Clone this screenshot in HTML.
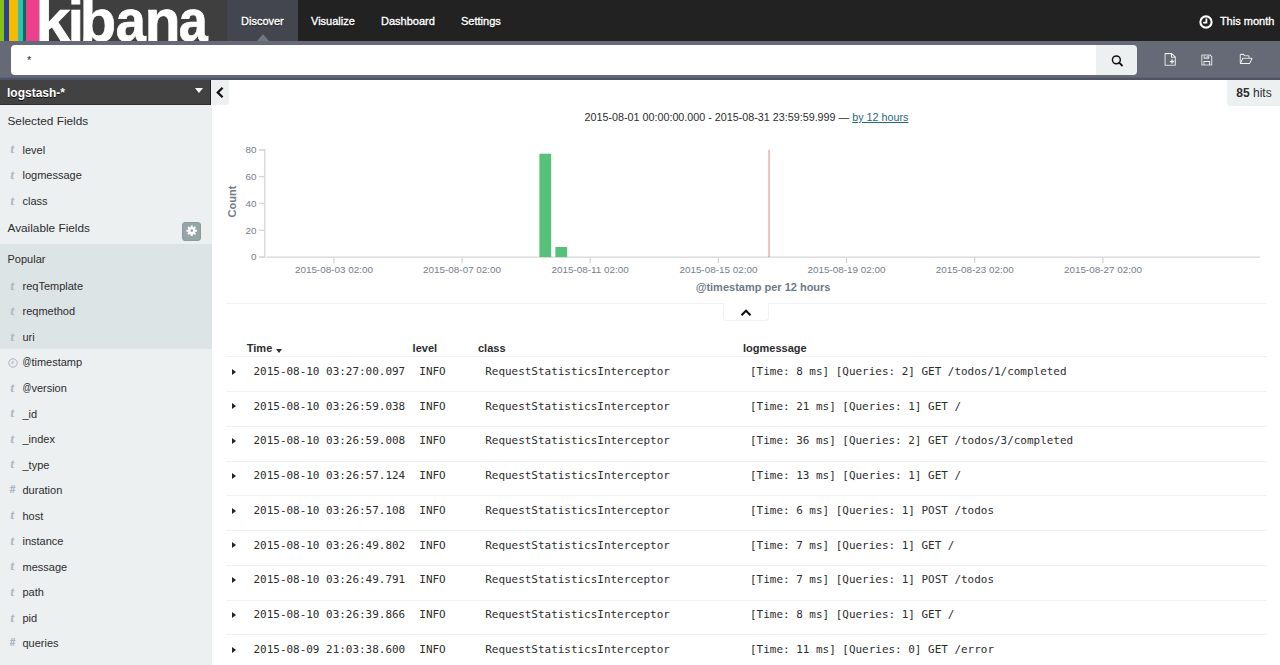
<!DOCTYPE html>
<html lang="en"><head><meta charset="utf-8"><title>Discover - Kibana 4</title>
<style>
*{box-sizing:border-box}
html,body{margin:0;padding:0}
body{width:1280px;height:665px;overflow:hidden;background:#fff;font-family:"Liberation Sans",Arial,sans-serif;font-size:11px;color:#2d2d2d;position:relative}
.abs{position:absolute}
#sub>svg{filter:drop-shadow(0 0 .7px rgba(0,0,0,.55))}
#nav{position:absolute;left:0;top:0;width:1280px;height:41px;background:#222}
#logo{position:absolute;left:0;top:0;width:227px;height:41px;background:#3f3f3f;overflow:hidden}
#logo b{position:absolute;top:0;height:41px}
#logo .kt{position:absolute;left:0;top:-14.1px;font-weight:bold;font-size:58.6px;line-height:70px;color:#fff;white-space:nowrap;-webkit-text-stroke:.75px #fff}
#logo .kt span{position:absolute;top:0;transform-origin:0 0;display:block}
.nl{position:absolute;top:0;height:41px;line-height:42.4px;color:#fff;font-size:11px;padding:0 13.5px;-webkit-text-stroke:.35px #fff;text-shadow:0 1px 1px rgba(0,0,0,.9)}
.nl.act{background:#43464f}
.nl.act:after{content:"";position:absolute;left:50%;bottom:0;margin-left:-6px;border:6px solid transparent;border-top:0;border-bottom:7px solid #70757f}
#sub{position:absolute;left:0;top:41px;width:1280px;height:39px;background:#656a76}
#q{position:absolute;left:11px;top:4px;width:1086px;height:30px;background:#fff;border-radius:4px 0 0 4px;font-size:11px;line-height:30px;padding-left:16px;color:#2d2d2d}
#qb{position:absolute;left:1096px;top:4px;width:41px;height:30px;background:#ecf0f1;border-radius:0 4px 4px 0}
#side{position:absolute;left:0;top:80px;width:212px;height:585px;background:#ecf0f1;overflow:hidden}
#ip{position:absolute;left:0;top:0;width:211px;height:25px;background:#424242;border-right:1px solid #222;border-bottom:1px solid #303030;color:#fff;font-weight:bold;font-size:12px;line-height:27.6px;padding-left:7px;text-shadow:0 1px 0 rgba(0,0,0,.8)}
#ip:after{content:"";position:absolute;left:194.5px;top:8px;border:4px solid transparent;border-bottom:0;border-top:5px solid #fff}
.sh{position:absolute;left:7.5px;font-size:11.8px;line-height:20px;margin-top:.45px;color:#2d2d2d}
#pop{position:absolute;left:0;top:164px;width:212px;height:105px;background:#dde4e6}
.fld{position:absolute;left:0;height:20px;line-height:20px;font-size:11px;white-space:nowrap;color:#2d2d2d;top:0}
#side .fld{margin-top:-80px}
.fld span{position:absolute;left:22.5px;top:0}
.ft{position:absolute;left:10.6px;top:-.2px;font-family:"Liberation Serif",serif;font-style:italic;font-size:12.5px;color:#aeb8c3;font-weight:bold;-webkit-text-stroke:.2px #aeb8c3}
.fh{position:absolute;left:9.7px;top:0;font-style:normal;font-size:10px;color:#a9b4c0;font-weight:bold;-webkit-text-stroke:.2px #a9b4c0}
.at{display:inline-block;font-weight:normal;transform:translate(-.4px,-1.2px) scaleX(.8);transform-origin:0 50%;margin-right:-2.3px}
.fc{position:absolute;left:7.5px;top:5.5px}
#gear{position:absolute;left:182.4px;top:141.7px;width:18.9px;height:19.3px;background:#95a5a6;border:1px solid #8b9c9d;border-radius:3px}
#coll{position:absolute;left:212px;top:80px;width:17px;height:25px;background:#ecf0f1;border-radius:0 0 4px 0}
#hits{position:absolute;left:1227px;top:80px;width:53px;height:25.5px;background:#ecf0f1;border-radius:0 0 0 4px;font-size:12px;line-height:27px;padding-left:9.3px;color:#2d2d2d}
#ttl{position:absolute;left:446.5px;top:107px;width:600px;text-align:center;font-size:10.75px;line-height:20px;color:#2d2d2d;white-space:nowrap}
#ttl a{color:#1f6b7a;text-decoration:underline}
.chart{position:absolute;left:0;top:0}
.tk{font-size:9.9px;fill:#74808c;font-family:"Liberation Sans",Arial,sans-serif}
.al{font-size:11px;font-weight:bold;fill:#6e7a87;font-family:"Liberation Sans",Arial,sans-serif}
#hr{position:absolute;left:226px;top:303px;width:1041px;height:1px;background:#f1f3f4}
#cb{position:absolute;left:723.4px;top:303px;width:46px;height:18.2px;background:#fff;border:1px solid #f0f2f3;border-top:0;border-radius:0 0 4px 4px}
.th{position:absolute;top:338.0px;font-weight:bold;font-size:11px;line-height:20px;color:#2d2d2d;white-space:nowrap}
#thl{position:absolute;left:226px;top:356px;width:1041px;height:1px;background:#eef1f3}
.row{position:absolute;left:226px;width:1041px;height:34.75px;border-top:1px solid #eff2f3;font-family:"DejaVu Sans Mono","Liberation Mono",monospace;font-size:10.96px;line-height:20px;color:#2d2d2d;white-space:nowrap}
.row span{position:absolute;top:4.6px}
.c1{left:27.5px}.c2{left:193.3px}.c3{left:259.2px}.c4{left:524.0px}
.tri{position:absolute;left:5.6px;top:11.2px;border:3.2px solid transparent;border-right:0;border-left:4.6px solid #222}
</style></head><body>
<div id="nav">
 <div id="logo">
  <b style="left:0;width:3.8px;background:#84c40c"></b>
  <b style="left:3.8px;width:5.2px;background:#2c4196"></b>
  <b style="left:9px;width:8.5px;background:#f5bb00"></b>
  <b style="left:17.5px;width:5.7px;background:#2fbfb3"></b>
  <b style="left:23.2px;width:3px;background:#0b6c5c"></b>
  <b style="left:26.2px;width:13px;background:#ec3f8c"></b>
  <span class="kt"><span style="left:0;transform:translateX(35.52px) scaleX(1.071)">k</span><span style="left:0;transform:translateX(67.76px) scaleX(0.997)">i</span><span style="left:0;transform:translateX(79.76px) scaleX(1.016)">b</span><span style="left:0;transform:translateX(115.71px) scaleX(0.923)">a</span><span style="left:0;transform:translateX(144.65px) scaleX(0.999)">n</span><span style="left:0;transform:translateX(178.71px) scaleX(0.89)">a</span></span>
 </div>
 <div class="nl act" style="left:227px;width:71px;padding-left:14px">Discover</div>
 <div class="nl" style="left:297.5px">Visualize</div>
 <div class="nl" style="left:367.5px">Dashboard</div>
 <div class="nl" style="left:447.5px">Settings</div>
 <svg class="abs" style="left:1198.4px;top:13.5px" width="16" height="16" viewBox="0 0 16 16"><circle cx="8" cy="8" r="5.6" fill="none" stroke="#fff" stroke-width="2.1"/><path d="M8.4 4.6V8.7H5.2" fill="none" stroke="#fff" stroke-width="1.8"/></svg>
 <div class="nl" style="left:1206.4px;padding-right:0">This month</div>
</div>
<div id="sub">
 <div style="position:absolute;left:0;top:36px;width:1280px;height:3px;background:linear-gradient(#656a76,#4e5366 45%,#4e5366)"></div>
 <div id="q">*</div>
 <div id="qb"><svg class="abs" style="left:14px;top:9px" width="14" height="14" viewBox="0 0 14 14"><circle cx="6.37" cy="5.87" r="3.95" fill="none" stroke="#111" stroke-width="1.45"/><path d="M9.2 8.700L12 11.5" stroke="#111" stroke-width="1.8" stroke-linecap="round"/></svg></div>
 <svg class="abs" style="left:1162.5px;top:11.1px" width="15.1" height="15.3" viewBox="0 0 16 16"><path d="M2.2 1.6H9.2L13 5.2V14H2.2Z M9 1.8V5.4H12.8" fill="none" stroke="#ecf0f1" stroke-width="1.2" stroke-linejoin="round"/><path d="M9.6 7.6V12.4M7.2 10H12" stroke="#ecf0f1" stroke-width="1.5"/></svg>
 <svg class="abs" style="left:1199.8px;top:11.6px" width="14.3" height="14.2" viewBox="0 0 16 16"><path d="M2 2.2H11.2L13.2 4.2V13.6H2Z" fill="none" stroke="#ecf0f1" stroke-width="1.2" stroke-linejoin="round"/><path d="M4.6 2.4V5.8H9.8V2.4M4.4 13.4V9.6H10.8V13.4" fill="none" stroke="#ecf0f1" stroke-width="1.2"/><path d="M8 3V5" stroke="#ecf0f1" stroke-width="1.3"/></svg>
 <svg class="abs" style="left:1238px;top:11.3px" width="15.8" height="14.4" viewBox="0 0 17 16"><path d="M2.2 12.6V3.6Q2.2 2.6 3.2 2.6H5.8L7 4.2H11Q12 4.200 12 5.2V6.6" fill="none" stroke="#ecf0f1" stroke-width="1.2" stroke-linejoin="round"/><path d="M2.4 12.8L5 7H15.4L12.6 12.8Z" fill="none" stroke="#ecf0f1" stroke-width="1.2" stroke-linejoin="round"/></svg>
</div>
<div id="side">
 <div id="ip">logstash-*</div>
 <div class="sh" style="top:31px">Selected Fields</div>
 <div class="sh" style="top:137.6px">Available Fields</div>
 <div id="gear"><svg class="abs" style="left:2.7px;top:2.8px" width="11.4" height="11.4" viewBox="0 0 12 12"><circle cx="6" cy="6" r="2.65" fill="none" stroke="#fff" stroke-width="2.5"/><g stroke="#fff" stroke-width="2.1"><path d="M6 .5V2.6M6 9.4V11.5M.5 6H2.6M9.4 6H11.5M2.1 2.1L3.6 3.6M8.4 8.4L9.9 9.9M2.1 9.9L3.6 8.4M8.4 3.6L9.9 2.1"/></g></svg></div>
 <div id="pop"></div>
 <div class="sh" style="top:168.4px;font-size:11px">Popular</div>
<div class="fld" style="top:139.6px"><i class="ft">t</i><span>level</span></div>
<div class="fld" style="top:165.1px"><i class="ft">t</i><span>logmessage</span></div>
<div class="fld" style="top:190.7px"><i class="ft">t</i><span>class</span></div>
<div class="fld" style="top:275.7px"><i class="ft">t</i><span>reqTemplate</span></div>
<div class="fld" style="top:301.2px"><i class="ft">t</i><span>reqmethod</span></div>
<div class="fld" style="top:326.8px"><i class="ft">t</i><span>uri</span></div>
<div class="fld" style="top:352.4px"><svg class="fc" width="10" height="10" viewBox="0 0 10 10"><circle cx="5" cy="5" r="4.2" fill="none" stroke="#a9b4c0" stroke-width="1"/><path d="M5 2.6V5.2H3.2" fill="none" stroke="#a9b4c0" stroke-width="1"/></svg><span><b class="at">@</b>timestamp</span></div>
<div class="fld" style="top:377.9px"><i class="ft">t</i><span><b class="at">@</b>version</span></div>
<div class="fld" style="top:403.5px"><i class="ft">t</i><span>_id</span></div>
<div class="fld" style="top:429.0px"><i class="ft">t</i><span>_index</span></div>
<div class="fld" style="top:454.5px"><i class="ft">t</i><span>_type</span></div>
<div class="fld" style="top:480.0px"><i class="fh">#</i><span>duration</span></div>
<div class="fld" style="top:505.6px"><i class="ft">t</i><span>host</span></div>
<div class="fld" style="top:531.1px"><i class="ft">t</i><span>instance</span></div>
<div class="fld" style="top:556.6px"><i class="ft">t</i><span>message</span></div>
<div class="fld" style="top:582.2px"><i class="ft">t</i><span>path</span></div>
<div class="fld" style="top:607.7px"><i class="ft">t</i><span>pid</span></div>
<div class="fld" style="top:633.2px"><i class="fh">#</i><span>queries</span></div>
<div class="fld" style="top:658.8px"><i class="ft">t</i><span>thread</span></div>
</div>
<div id="coll"><svg class="abs" style="left:2.5px;top:6px" width="10" height="13" viewBox="0 0 10 13"><path d="M7.6 1.8L2.800 6.5L7.6 11.2" fill="none" stroke="#111" stroke-width="2.3" stroke-linejoin="miter"/></svg></div>
<div id="hits"><b>85</b> hits</div>
<div id="ttl">2015-08-01 00:00:00.000 - 2015-08-31 23:59:59.999 &mdash; <a>by 12 hours</a></div>
<svg class="chart" width="1280" height="665" viewBox="0 0 1280 665">
<path d="M259 150H264.8V257.1H259" fill="none" stroke="#d6d6d6" stroke-width="1.3"/>
<path d="M259 257.1H264.8" stroke="#d6d6d6" stroke-width="1.3"/>
<text x="256.4" y="260.4" text-anchor="end" class="tk">0</text>
<path d="M259 230.3H264.8" stroke="#d6d6d6" stroke-width="1.3"/>
<text x="256.4" y="233.6" text-anchor="end" class="tk">20</text>
<path d="M259 203.4H264.8" stroke="#d6d6d6" stroke-width="1.3"/>
<text x="256.4" y="206.7" text-anchor="end" class="tk">40</text>
<path d="M259 176.6H264.8" stroke="#d6d6d6" stroke-width="1.3"/>
<text x="256.4" y="179.9" text-anchor="end" class="tk">60</text>
<path d="M259 149.7H264.8" stroke="#d6d6d6" stroke-width="1.3"/>
<text x="256.4" y="153.0" text-anchor="end" class="tk">80</text>
<path d="M266.6 257.1H1260" stroke="#d6d6d6" stroke-width="1.3"/>
<path d="M333.9 257.1V263.1" stroke="#d6d6d6" stroke-width="1.3"/>
<text x="333.9" y="273.4" text-anchor="middle" class="tk">2015-08-03 02:00</text>
<path d="M462.1 257.1V263.1" stroke="#d6d6d6" stroke-width="1.3"/>
<text x="462.1" y="273.4" text-anchor="middle" class="tk">2015-08-07 02:00</text>
<path d="M590.2 257.1V263.1" stroke="#d6d6d6" stroke-width="1.3"/>
<text x="590.2" y="273.4" text-anchor="middle" class="tk">2015-08-11 02:00</text>
<path d="M718.4 257.1V263.1" stroke="#d6d6d6" stroke-width="1.3"/>
<text x="718.4" y="273.4" text-anchor="middle" class="tk">2015-08-15 02:00</text>
<path d="M846.5 257.1V263.1" stroke="#d6d6d6" stroke-width="1.3"/>
<text x="846.5" y="273.4" text-anchor="middle" class="tk">2015-08-19 02:00</text>
<path d="M974.7 257.1V263.1" stroke="#d6d6d6" stroke-width="1.3"/>
<text x="974.7" y="273.4" text-anchor="middle" class="tk">2015-08-23 02:00</text>
<path d="M1102.9 257.1V263.1" stroke="#d6d6d6" stroke-width="1.3"/>
<text x="1102.9" y="273.4" text-anchor="middle" class="tk">2015-08-27 02:00</text>
<rect x="539.4" y="153.7" width="11.8" height="103.4" fill="#57c17b"/>
<rect x="555.4" y="247.0" width="11.8" height="10.1" fill="#57c17b"/>
<path d="M769.1 149.7V257.1" stroke="#c80000" stroke-opacity="0.3" stroke-width="1.6"/>
<text transform="translate(236.2 201.6) rotate(-90)" text-anchor="middle" class="al">Count</text>
<text x="763.1" y="291.2" text-anchor="middle" class="al">@timestamp per 12 hours</text>
</svg>
<div id="hr"></div>
<div id="cb"><svg class="abs" style="left:15.4px;top:5.1px" width="12" height="9.2" viewBox="0 0 13 10"><path d="M1.6 7.8L6.5 3L11.4 7.800" fill="none" stroke="#111" stroke-width="2.2"/></svg></div>
<div class="th" style="left:246.8px">Time <i style="display:inline-block;vertical-align:middle;margin:3px 0 0 .5px;border:3.8px solid transparent;border-bottom:0;border-top:4px solid #2d2d2d"></i></div>
<div class="th" style="left:412.6px">level</div>
<div class="th" style="left:478px">class</div>
<div class="th" style="left:743px">logmessage</div>
<div class="row" style="top:356.40px"><i class="tri"></i><span class="c1">2015-08-10 03:27:00.097</span><span class="c2">INFO</span><span class="c3">RequestStatisticsInterceptor</span><span class="c4">[Time: 8 ms] [Queries: 2] GET /todos/1/completed</span></div>
<div class="row" style="top:391.15px"><i class="tri"></i><span class="c1">2015-08-10 03:26:59.038</span><span class="c2">INFO</span><span class="c3">RequestStatisticsInterceptor</span><span class="c4">[Time: 21 ms] [Queries: 1] GET /</span></div>
<div class="row" style="top:425.90px"><i class="tri"></i><span class="c1">2015-08-10 03:26:59.008</span><span class="c2">INFO</span><span class="c3">RequestStatisticsInterceptor</span><span class="c4">[Time: 36 ms] [Queries: 2] GET /todos/3/completed</span></div>
<div class="row" style="top:460.65px"><i class="tri"></i><span class="c1">2015-08-10 03:26:57.124</span><span class="c2">INFO</span><span class="c3">RequestStatisticsInterceptor</span><span class="c4">[Time: 13 ms] [Queries: 1] GET /</span></div>
<div class="row" style="top:495.40px"><i class="tri"></i><span class="c1">2015-08-10 03:26:57.108</span><span class="c2">INFO</span><span class="c3">RequestStatisticsInterceptor</span><span class="c4">[Time: 6 ms] [Queries: 1] POST /todos</span></div>
<div class="row" style="top:530.15px"><i class="tri"></i><span class="c1">2015-08-10 03:26:49.802</span><span class="c2">INFO</span><span class="c3">RequestStatisticsInterceptor</span><span class="c4">[Time: 7 ms] [Queries: 1] GET /</span></div>
<div class="row" style="top:564.90px"><i class="tri"></i><span class="c1">2015-08-10 03:26:49.791</span><span class="c2">INFO</span><span class="c3">RequestStatisticsInterceptor</span><span class="c4">[Time: 7 ms] [Queries: 1] POST /todos</span></div>
<div class="row" style="top:599.65px"><i class="tri"></i><span class="c1">2015-08-10 03:26:39.866</span><span class="c2">INFO</span><span class="c3">RequestStatisticsInterceptor</span><span class="c4">[Time: 8 ms] [Queries: 1] GET /</span></div>
<div class="row" style="top:634.40px"><i class="tri"></i><span class="c1">2015-08-09 21:03:38.600</span><span class="c2">INFO</span><span class="c3">RequestStatisticsInterceptor</span><span class="c4">[Time: 11 ms] [Queries: 0] GET /error</span></div>
</body></html>
